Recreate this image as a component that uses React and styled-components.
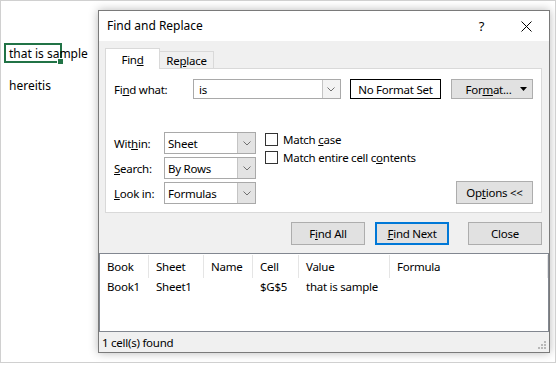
import React from "react";
import styled, { createGlobalStyle } from "styled-components";

const GlobalStyle = createGlobalStyle`
  html, body {
    margin: 0;
    padding: 0;
    background: #ffffff;
  }
  body {
    font-family: "Noto Sans", "Open Sans", sans-serif;
    color: #000000;
  }
`;

const Screen = styled.div`
  position: relative;
  width: 556px;
  height: 363px;
  box-sizing: border-box;
  border: 1px solid #d0d0d0;
  background: #ffffff;
  overflow: hidden;
`;

const Sheet = styled.div`
  display: flex;
  flex-direction: column;
  padding: 42px 0 0 3px;
  gap: 12px;
`;

const Cell = styled.div`
  position: relative;
  width: 58px;
  height: 20px;
  box-sizing: border-box;
  border: 2px solid ${(p) => (p.$active ? "#217346" : "transparent")};
  padding-left: 3px;
  display: flex;
  align-items: center;
  white-space: nowrap;
  font-size: 12px;
  overflow: visible;
`;

const FillHandle = styled.span`
  position: absolute;
  right: -4px;
  bottom: -4px;
  width: 5px;
  height: 5px;
  background: #217346;
  border: 1px solid #ffffff;
`;

const Dialog = styled.div`
  position: absolute;
  left: 97px;
  top: 9px;
  width: 452px;
  height: 343px;
  box-sizing: border-box;
  border: 1px solid #7a7a7a;
  background: #f0f0f0;
  box-shadow: 0 0 9px rgba(0, 0, 0, 0.28);
  display: flex;
  flex-direction: column;
  font-size: 11.5px;
  letter-spacing: -0.25px;
`;

const TitleBar = styled.div`
  height: 30px;
  background: #ffffff;
  display: flex;
  align-items: center;
  padding-left: 8px;
  flex-shrink: 0;
`;

const Title = styled.span`
  flex: 1;
  font-size: 12px;
  margin-top: -2px;
  letter-spacing: 0;
`;

const TitleIcon = styled.span`
  width: 45px;
  height: 30px;
  display: flex;
  align-items: center;
  justify-content: center;
  font-size: 13px;
`;

const Body = styled.div`
  display: flex;
  flex-direction: column;
  padding: 7px 7px 0 6px;
`;

const TabRow = styled.div`
  display: flex;
  align-items: flex-end;
  margin-bottom: -1px;
  position: relative;
  z-index: 1;
`;

const Tab = styled.div`
  box-sizing: border-box;
  width: ${(p) => p.$w}px;
  height: ${(p) => (p.$active ? 21 : 18)}px;
  border: 1px solid #d9d9d9;
  border-bottom: ${(p) => (p.$active ? "none" : "1px solid #d9d9d9")};
  border-left: ${(p) => (p.$active ? "1px solid #d9d9d9" : "none")};
  background: ${(p) => (p.$active ? "#ffffff" : "#f0f0f0")};
  display: flex;
  align-items: center;
  justify-content: center;
  padding-top: ${(p) => (p.$active ? 0 : 1)}px;
`;

const Panel = styled.div`
  box-sizing: border-box;
  height: 145px;
  background: #ffffff;
  border: 1px solid #d9d9d9;
  padding: 10px 8px 8px 8px;
  display: flex;
  flex-direction: column;
`;

const FindRow = styled.div`
  display: flex;
  align-items: center;
  height: 20px;
`;

const Label = styled.span`
  width: ${(p) => p.$w}px;
  flex-shrink: 0;
`;

const Combo = styled.div`
  box-sizing: border-box;
  width: ${(p) => p.$w}px;
  height: ${(p) => p.$h}px;
  border: 1px solid #a9a9a9;
  display: flex;
  align-items: stretch;
  background: #ffffff;
`;

const ComboText = styled.span`
  flex: 1;
  display: flex;
  align-items: center;
  padding-left: ${(p) => p.$pad}px;
`;

const ComboArrow = styled.span`
  width: 17px;
  display: flex;
  align-items: center;
  justify-content: center;
  background: ${(p) => (p.$filled ? "#e3e3e3" : "#f3f3f3")};
  border-left: 1px solid #c4c4c4;
`;

const FormatBox = styled.div`
  box-sizing: border-box;
  width: 92px;
  height: 20px;
  margin-left: 9px;
  border: 1px solid #000000;
  display: flex;
  align-items: center;
  justify-content: center;
`;

const Button = styled.div`
  box-sizing: border-box;
  width: ${(p) => p.$w}px;
  height: ${(p) => p.$h || 23}px;
  background: #e1e1e1;
  border: ${(p) => (p.$default ? "2px solid #0078d7" : "1px solid #adadad")};
  display: flex;
  align-items: center;
  justify-content: center;
  gap: 8px;
  flex-shrink: 0;
`;

const FormatButton = styled(Button)`
  margin-left: 10px;
  padding-left: 8px;
`;

const Options = styled.div`
  display: flex;
  margin-top: 33px;
  flex: 1;
`;

const Selects = styled.div`
  display: flex;
  flex-direction: column;
  gap: 3px;
`;

const SelectRow = styled.div`
  display: flex;
  align-items: center;
`;

const Checks = styled.div`
  display: flex;
  flex-direction: column;
  gap: 4px;
  margin-left: 9px;
  padding-top: 0;
`;

const CheckRow = styled.label`
  display: flex;
  align-items: center;
  gap: 5px;
  height: 14px;
`;

const Box = styled.span`
  width: 13px;
  height: 13px;
  box-sizing: border-box;
  border: 1px solid #333333;
  background: #ffffff;
`;

const OptionsButton = styled(Button)`
  margin-left: auto;
  align-self: flex-end;
`;

const ButtonRow = styled.div`
  display: flex;
  justify-content: flex-end;
  margin-top: 9px;
`;

const Gap = styled.span`
  width: ${(p) => p.$w}px;
`;

const Results = styled.div`
  box-sizing: border-box;
  height: 79px;
  margin: 8px -7px 0 -6px;
  border: 1px solid #828790;
  background: #ffffff;
`;

const ResultRow = styled.div`
  display: grid;
  grid-template-columns: 49px 55px 49px 46px 91px 1fr;
  height: ${(p) => (p.$header ? 24 : 17)}px;
  align-items: center;
`;

const HeadCell = styled.div`
  height: 23px;
  display: flex;
  align-items: center;
  padding-left: 7px;
  border-right: 1px solid #e5e5e5;
`;

const DataCell = styled.div`
  padding-left: 7px;
  white-space: nowrap;
`;

const StatusBar = styled.div`
  flex: 1;
  position: relative;
  display: flex;
  align-items: center;
  padding-left: 3px;
`;

const Grip = styled.svg`
  position: absolute;
  right: 2px;
  bottom: 2px;
`;

const Chevron = () => (
  <svg width="8" height="5" viewBox="0 0 8 5">
    <path d="M0.5 0.5 L4 4 L7.5 0.5" fill="none" stroke="#707070" strokeWidth="1" />
  </svg>
);

const CloseIcon = () => (
  <svg width="11" height="11" viewBox="0 0 11 11">
    <path d="M0.5 0.5 L10.5 10.5 M10.5 0.5 L0.5 10.5" stroke="#000" strokeWidth="1" />
  </svg>
);

const Select = ({ value }) => (
  <Combo $w={92} $h={22}>
    <ComboText $pad={3}>{value}</ComboText>
    <ComboArrow $filled>
      <Chevron />
    </ComboArrow>
  </Combo>
);

const columns = ["Book", "Sheet", "Name", "Cell", "Value", "Formula"];
const rows = [["Book1", "Sheet1", "", "$G$5", "that is sample", ""]];

export default function App() {
  return (
    <>
      <GlobalStyle />
      <Screen>
        <Sheet>
          <Cell $active>
            that is sample
            <FillHandle />
          </Cell>
          <Cell>hereitis</Cell>
        </Sheet>

        <Dialog>
          <TitleBar>
            <Title>Find and Replace</Title>
            <TitleIcon>?</TitleIcon>
            <TitleIcon>
              <CloseIcon />
            </TitleIcon>
          </TitleBar>

          <Body>
            <TabRow>
              <Tab $active $w={55}>
                Fin<u>d</u>
              </Tab>
              <Tab $w={54}>
                Re<u>p</u>lace
              </Tab>
            </TabRow>

            <Panel>
              <FindRow>
                <Label $w={79}>
                  Fi<u>n</u>d what:
                </Label>
                <Combo $w={149} $h={20}>
                  <ComboText $pad={5}>is</ComboText>
                  <ComboArrow>
                    <Chevron />
                  </ComboArrow>
                </Combo>
                <FormatBox>No Format Set</FormatBox>
                <FormatButton $w={82} $h={20}>
                  <span>
                    For<u>m</u>at...
                  </span>
                  <svg width="7" height="4" viewBox="0 0 7 4">
                    <path d="M0 0 L7 0 L3.5 4 Z" fill="#000" />
                  </svg>
                </FormatButton>
              </FindRow>

              <Options>
                <Selects>
                  <SelectRow>
                    <Label $w={50}>
                      Wit<u>h</u>in:
                    </Label>
                    <Select value="Sheet" />
                  </SelectRow>
                  <SelectRow>
                    <Label $w={50}>
                      <u>S</u>earch:
                    </Label>
                    <Select value="By Rows" />
                  </SelectRow>
                  <SelectRow>
                    <Label $w={50}>
                      <u>L</u>ook in:
                    </Label>
                    <Select value="Formulas" />
                  </SelectRow>
                </Selects>

                <Checks>
                  <CheckRow>
                    <Box />
                    <span>
                      Match <u>c</u>ase
                    </span>
                  </CheckRow>
                  <CheckRow>
                    <Box />
                    <span>
                      Match entire cell c<u>o</u>ntents
                    </span>
                  </CheckRow>
                </Checks>

                <OptionsButton $w={77}>
                  <span>
                    Op<u>t</u>ions &lt;&lt;
                  </span>
                </OptionsButton>
              </Options>
            </Panel>

            <ButtonRow>
              <Button $w={74}>
                <span>
                  F<u>i</u>nd All
                </span>
              </Button>
              <Gap $w={10} />
              <Button $w={74} $default>
                <span>
                  <u>F</u>ind Next
                </span>
              </Button>
              <Gap $w={19} />
              <Button $w={74}>Close</Button>
            </ButtonRow>

            <Results>
              <ResultRow $header>
                {columns.map((c) => (
                  <HeadCell key={c}>{c}</HeadCell>
                ))}
              </ResultRow>
              {rows.map((r, i) => (
                <ResultRow key={i}>
                  {r.map((v, j) => (
                    <DataCell key={j}>{v}</DataCell>
                  ))}
                </ResultRow>
              ))}
            </Results>
          </Body>

          <StatusBar>
            1 cell(s) found
            <Grip width="9" height="9" viewBox="0 0 9 9">
              <rect x="6" y="0" width="2" height="2" fill="#b8b8b8" />
              <rect x="3" y="3" width="2" height="2" fill="#b8b8b8" />
              <rect x="6" y="3" width="2" height="2" fill="#b8b8b8" />
              <rect x="0" y="6" width="2" height="2" fill="#b8b8b8" />
              <rect x="3" y="6" width="2" height="2" fill="#b8b8b8" />
              <rect x="6" y="6" width="2" height="2" fill="#b8b8b8" />
            </Grip>
          </StatusBar>
        </Dialog>
      </Screen>
    </>
  );
}
